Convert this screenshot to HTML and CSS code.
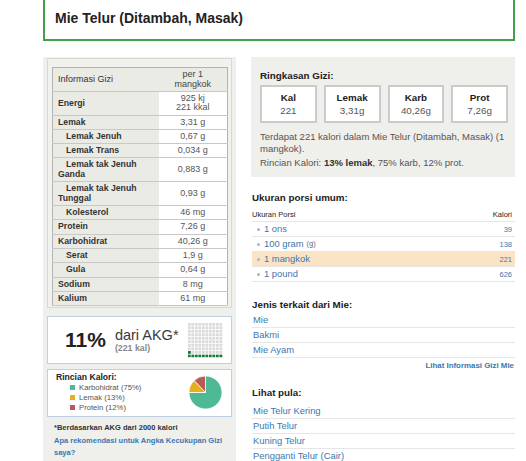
FILE: index.html
```html
<!DOCTYPE html>
<html>
<head>
<meta charset="utf-8">
<link rel="stylesheet" href="styles.css">
</head>
<body>
<div class="page">
  <div class="title-box"><h1 class="title">Mie Telur (Ditambah, Masak)</h1></div>
  <div class="cols">
    <div class="left">
      <div class="nutri">
        <table class="ntable">
          <tr class="head"><td class="lab">Informasi Gizi</td><td class="val">per 1<br>mangkok</td></tr>
          <tr><td class="lab">Energi</td><td class="val">925 kj<br>221 kkal</td></tr>
          <tr><td class="lab">Lemak</td><td class="val">3,31 g</td></tr>
          <tr><td class="lab sub">Lemak Jenuh</td><td class="val">0,67 g</td></tr>
          <tr><td class="lab sub">Lemak Trans</td><td class="val">0,034 g</td></tr>
          <tr><td class="lab sub">Lemak tak Jenuh<br>Ganda</td><td class="val">0,883 g</td></tr>
          <tr><td class="lab sub">Lemak tak Jenuh<br>Tunggal</td><td class="val">0,93 g</td></tr>
          <tr><td class="lab sub">Kolesterol</td><td class="val">46 mg</td></tr>
          <tr><td class="lab">Protein</td><td class="val">7,26 g</td></tr>
          <tr><td class="lab">Karbohidrat</td><td class="val">40,26 g</td></tr>
          <tr><td class="lab sub">Serat</td><td class="val">1,9 g</td></tr>
          <tr><td class="lab sub">Gula</td><td class="val">0,64 g</td></tr>
          <tr><td class="lab">Sodium</td><td class="val">8 mg</td></tr>
          <tr><td class="lab">Kalium</td><td class="val">61 mg</td></tr>
        </table>
      </div>
      <div class="akg">
        <div class="pct">11%</div>
        <div class="akg-txt">
          <div class="dari">dari AKG*</div>
          <div class="kal">(221 kal)</div>
        </div>
        <svg class="grid" width="35" height="35" viewBox="0 0 35 35">
          <defs>
            <pattern id="pg" width="3.5" height="3.5" patternUnits="userSpaceOnUse"><rect width="2.8" height="2.8" fill="#dadada"/></pattern>
            <pattern id="pgg" width="3.5" height="3.5" patternUnits="userSpaceOnUse"><rect width="2.8" height="2.8" fill="#17793b"/></pattern>
          </defs>
          <rect width="35" height="31.5" fill="url(#pg)"/>
          <rect y="31.5" width="35" height="3.5" fill="url(#pgg)"/>
          <rect x="0" y="28" width="2.8" height="2.8" fill="#17793b"/>
        </svg>
      </div>
      <div class="rinc">
        <div class="rinc-body">
          <div class="rinc-title">Rincian Kalori:</div>
          <div class="legend">
            <div class="li"><span class="sq c-carb"></span>Karbohidrat (75%)</div>
            <div class="li"><span class="sq c-fat"></span>Lemak (13%)</div>
            <div class="li"><span class="sq c-prot"></span>Protein (12%)</div>
          </div>
        </div>
        <svg class="pie" width="35" height="35" viewBox="0 0 36 36">
          <path d="M18,18 L18,1 A17,17 0 1,1 1,18 Z" fill="#4fb894" stroke="#fff" stroke-width="0.8"/>
          <path d="M18,18 L1,18 A17,17 0 0,1 6.36,5.61 Z" fill="#e3b01e" stroke="#fff" stroke-width="0.8"/>
          <path d="M18,18 L6.36,5.61 A17,17 0 0,1 18,1 Z" fill="#b85a57" stroke="#fff" stroke-width="0.8"/>
        </svg>
      </div>
      <p class="foot">*Berdasarkan AKG dari 2000 kalori</p>
      <a class="foot-link" href="#">Apa rekomendasi untuk Angka Kecukupan Gizi saya?</a>
    </div>
    <div class="right">
      <div class="summary">
        <h2 class="h">Ringkasan Gizi:</h2>
        <div class="boxes">
          <div class="box"><b>Kal</b><span>221</span></div>
          <div class="box"><b>Lemak</b><span>3,31g</span></div>
          <div class="box"><b>Karb</b><span>40,26g</span></div>
          <div class="box"><b>Prot</b><span>7,26g</span></div>
        </div>
        <p class="desc">Terdapat 221 kalori dalam Mie Telur (Ditambah, Masak) (1 mangkok).</p>
        <p class="desc desc2">Rincian Kalori: <b>13% lemak</b>, 75% karb, 12% prot.</p>
      </div>
      <div class="sec sec-porsi">
        <h2 class="h">Ukuran porsi umum:</h2>
        <div class="ptable">
          <div class="prow phead"><span>Ukuran Porsi</span><span>Kalori</span></div>
          <div class="prow"><a class="plink" href="#"><i class="dot"></i>1 ons</a><span class="num">39</span></div>
          <div class="prow"><a class="plink" href="#"><i class="dot"></i>100 gram <small>(g)</small></a><span class="num">138</span></div>
          <div class="prow hl"><a class="plink" href="#"><i class="dot"></i>1 mangkok</a><span class="num">221</span></div>
          <div class="prow"><a class="plink" href="#"><i class="dot"></i>1 pound</a><span class="num">626</span></div>
        </div>
      </div>
      <div class="sec sec-jenis">
        <h2 class="h">Jenis terkait dari Mie:</h2>
        <div class="lrow"><a href="#">Mie</a></div>
        <div class="lrow"><a href="#">Bakmi</a></div>
        <div class="lrow"><a href="#">Mie Ayam</a></div>
        <div class="more"><a href="#">Lihat Informasi Gizi Mie</a></div>
      </div>
      <div class="sec sec-lihat">
        <h2 class="h h-lihat">Lihat pula:</h2>
        <div class="lrow"><a href="#">Mie Telur Kering</a></div>
        <div class="lrow"><a href="#">Putih Telur</a></div>
        <div class="lrow"><a href="#">Kuning Telur</a></div>
        <div class="lrow"><a href="#">Pengganti Telur (Cair)</a></div>
      </div>
    </div>
  </div>
</div>
</body>
</html>
```
FILE: styles.css
```css
* { box-sizing: border-box; }
body {
  margin: 0;
  background: #fff;
  font-family: "Liberation Sans", Arial, sans-serif;
  color: #333;
  overflow: hidden;
}
a { text-decoration: none; color: #3b77ad; }
.page { width: 472px; margin-left: 43px; }

.title-box {
  margin-top: -2px;
  border: 2px solid #42a04e;
  padding: 9px 10px 12px;
}
.title { margin: 0; font-size: 14px; line-height: 18px; font-weight: bold; color: #222; }

.cols { display: flex; gap: 15px; margin-top: 16px; align-items: flex-start; }

.left {
  width: 193px;
  background: #efefeb;
  padding: 1px 4px 20px 4px;
  min-height: 420px;
}
.nutri {
  width: 185px;
  border: 1px solid #d8d8d4;
  background: #f1f1ed;
  padding: 8px 3px 1px 4px;
}
.ntable {
  width: 176px;
  border-collapse: collapse;
  border: 1px solid #b3b3b3;
  font-size: 9px;
  line-height: 9.5px;
}
.ntable td {
  border-bottom: 1px solid #c8c8c8;
  padding: 2px 3px 1.8px 5px;
  vertical-align: middle;
}
.ntable .lab { width: 106px; background: #ebebe6; font-weight: bold; font-size: 8.7px; color: #333; }
.ntable .sub { text-indent: 8px; }
.ntable .val { background: #fff; text-align: center; color: #555; padding-left: 3px; }
.ntable .head td { background: #ebebe6; font-weight: normal; font-size: 9px; color: #333; }
.ntable .head .val { color: #444; }

.akg {
  margin-top: 7.5px;
  height: 48px;
  border: 1px solid #bdd0e4;
  background: #fff;
  display: flex;
  align-items: flex-start;
  padding: 6px 8px 0 17px;
}
.pct { font-size: 21px; font-weight: bold; line-height: 21px; margin-top: 6px; color: #222; }
.akg-txt { margin-left: 9px; margin-top: 5.5px; }
.dari { font-size: 14.5px; line-height: 15px; color: #3a3a3a; }
.kal { font-size: 8.8px; font-weight: bold; line-height: 11px; color: #8a8a8a; }
.grid { margin-left: auto; display: block; }

.rinc {
  margin-top: 5px;
  height: 48px;
  border: 1px solid #bdd0e4;
  background: #fff;
  display: flex;
  align-items: flex-start;
  padding: 2px 8px 0 8px;
}
.rinc-title { font-size: 8.6px; font-weight: bold; line-height: 11px; color: #222; }
.legend { padding-left: 14px; }
.li { display: flex; align-items: center; gap: 4px; font-size: 7.7px; line-height: 10px; color: #555; }
.sq { width: 5px; height: 5px; display: block; }
.c-carb { background: #4fb894; }
.c-fat { background: #e3b01e; }
.c-prot { background: #b85a57; }
.pie { margin-left: auto; margin-top: 3px; display: block; }

.foot { margin: 5px 0 0 7px; font-size: 7.5px; font-weight: bold; line-height: 12px; color: #333; }
.foot-link { display: block; margin: 1.5px 0 0 7px; font-size: 7.5px; font-weight: bold; line-height: 12px; color: #3a78b0; }

.right { width: 264px; }
.summary { background: #efefeb; padding: 13px 7px 8px 9px; }
.h { margin: 0; font-size: 9.8px; font-weight: bold; line-height: 12px; color: #222; }
.boxes { display: flex; gap: 7px; margin-top: 3px; }
.box {
  flex: 1;
  height: 38px;
  border: 2px solid #cbcbcb;
  background: #fff;
  text-align: center;
  padding: 4px 0;
}
.box b { display: block; font-size: 9.8px; line-height: 13px; color: #222; }
.box span { display: block; font-size: 9.8px; line-height: 13px; color: #555; }
.desc { margin: 8px 0 0; font-size: 9.5px; line-height: 12px; color: #555; }
.desc b { color: #333; }
.desc2 { margin-top: 2px; }

.sec { padding-left: 1px; }
.sec-porsi { margin-top: 15px; }
.ptable { margin-top: 3px; }
.prow {
  display: flex;
  justify-content: space-between;
  align-items: center;
  height: 15px;
  border-bottom: 1px solid #e6e6e6;
  padding-right: 3px;
}
.phead { font-size: 7.5px; color: #222; }
.hl { background: #fbe3c6; }
.plink { display: flex; align-items: center; font-size: 9.4px; line-height: 14px; padding-left: 5px; }
.plink small { font-size: 7.5px; color: #666; margin-left: 3px; }
.dot { width: 3px; height: 3px; border-radius: 50%; background: #a6b8c9; margin-right: 4px; display: block; }
.num { font-size: 7.5px; color: #3b77ad; }

.sec-jenis { margin-top: 17px; }
.sec-jenis .h { margin-bottom: 2px; }
.lrow { height: 15px; border-bottom: 1px solid #e6e6e6; font-size: 9.4px; line-height: 14px; padding-left: 1px; }
.more { margin-top: 2px; text-align: right; font-size: 7.9px; font-weight: bold; line-height: 12px; padding-right: 1px; }
.sec-lihat { margin-top: 15px; }
.h-lihat { margin-bottom: 5px; }
```
